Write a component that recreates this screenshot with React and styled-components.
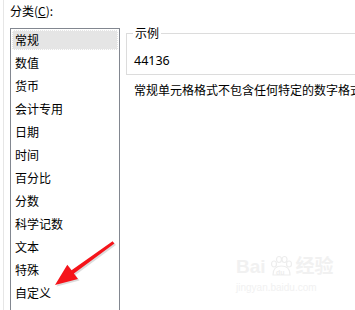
import React from "react";
import styled, { createGlobalStyle } from "styled-components";

const GlobalStyle = createGlobalStyle`
  html, body {
    margin: 0;
    padding: 0;
    background: #fff;
  }
`;

const categories = [
  "常规", "数值", "货币", "会计专用", "日期", "时间",
  "百分比", "分数", "科学记数", "文本", "特殊", "自定义",
];

const App = () => {
  return (
    <>
      <GlobalStyle />
      <Page>
        <Frame>
          <LeftColumn>
            <FieldLabel>
              分类(<u>C</u>):
            </FieldLabel>
            <ListBox>
              {categories.map((name, index) => (
                <ListItem key={name} $selected={index === 0}>
                  {name}
                </ListItem>
              ))}
            </ListBox>
          </LeftColumn>

          <RightColumn>
            <SampleGroup>
              <legend>示例</legend>
              <SampleValue>44136</SampleValue>
            </SampleGroup>
            <Description>常规单元格格式不包含任何特定的数字格式。</Description>
          </RightColumn>
        </Frame>

        <Arrow width="130" height="60" viewBox="0 0 130 60">
          <polygon
            points="5,55 17.3,34.7 21.5,40.3 62.6,11.2 64.4,13.6 23.9,43.5 28,49.1"
            fill="#b9b9b9"
            opacity="0.5"
            transform="translate(1.5,1.5)"
          />
          <polygon
            points="5,55 17.3,34.7 21.5,40.3 62.6,11.2 64.4,13.6 23.9,43.5 28,49.1"
            fill="#f5141a"
          />
        </Arrow>

        <Watermark>
          <WatermarkLogo>
            <span>Bai</span>
            <svg width="26" height="24" viewBox="0 0 26 24">
              <g fill="none" stroke="#ededed" strokeWidth="1.2">
                <ellipse cx="6" cy="9" rx="2.5" ry="3" />
                <ellipse cx="11" cy="4.5" rx="2.5" ry="3" />
                <ellipse cx="16.5" cy="4.5" rx="2.5" ry="3" />
                <ellipse cx="21" cy="9" rx="2.5" ry="3" />
                <path d="M5 20 C5 13 9 11 13.5 11 C18 11 22 13 22 20 Z" />
              </g>
              <text x="8" y="19.5" fontSize="7" fill="#ededed" fontFamily="Liberation Sans, sans-serif">du</text>
            </svg>
            <span>经验</span>
          </WatermarkLogo>
          <WatermarkUrl>jingyan.baidu.com</WatermarkUrl>
        </Watermark>
      </Page>
    </>
  );
};

const Page = styled.div`
  position: relative;
  width: 355px;
  height: 310px;
  overflow: hidden;
  background: #fff;
  font-family: "Microsoft YaHei", "Noto Sans CJK SC", "Noto Sans", sans-serif;
  font-size: 12px;
  color: #000;
`;

const Frame = styled.div`
  display: flex;
  align-items: flex-start;
  height: 100%;
  margin-left: 3px;
  padding-left: 6px;
  border-left: 1px solid #e6e6e6;
`;

const LeftColumn = styled.div`
  display: flex;
  flex-direction: column;
  width: 110px;
  flex-shrink: 0;
`;

const FieldLabel = styled.div`
  height: 28px;
  box-sizing: border-box;
  padding-top: 3px;
  line-height: 16px;

  u {
    text-decoration: underline;
    text-underline-offset: 1px;
  }
`;

const ListBox = styled.ul`
  list-style: none;
  margin: 0;
  padding: 1px;
  height: 320px;
  border: 1px solid #828790;
  box-sizing: border-box;
`;

const ListItem = styled.li`
  height: 20px;
  margin-bottom: 3px;
  padding-left: 2px;
  box-sizing: border-box;
  white-space: nowrap;
  border: 1px dotted ${({ $selected }) => ($selected ? "#ffffff" : "transparent")};
  background: ${({ $selected }) => ($selected ? "#e5e5e5" : "transparent")};
  line-height: 18px;
`;

const RightColumn = styled.div`
  display: flex;
  flex-direction: column;
  width: 300px;
  flex-shrink: 0;
  margin-left: 6px;
  padding-top: 25px;
`;

const SampleGroup = styled.fieldset`
  margin: 0;
  padding: 0 0 5px 7px;
  border: 1px solid #dcdcdc;
  min-width: 0;

  legend {
    padding: 0 2px;
    margin-left: -1px;
    line-height: 16px;
    color: #000;
  }
`;

const SampleValue = styled.div`
  margin-top: 12px;
  line-height: 16px;
  font-family: "Noto Sans", "Liberation Sans", sans-serif;
  font-size: 12.5px;
`;

const Description = styled.div`
  margin-top: 7px;
  padding-left: 8px;
  line-height: 16px;
  white-space: nowrap;
`;

const Arrow = styled.svg`
  position: absolute;
  left: 50px;
  top: 230px;
`;

const Watermark = styled.div`
  position: absolute;
  left: 236px;
  top: 255px;
  display: flex;
  flex-direction: column;
  align-items: flex-start;
  color: #f1f1f1;
  pointer-events: none;
`;

const WatermarkLogo = styled.div`
  display: flex;
  align-items: flex-end;
  gap: 2px;
  font-family: "Liberation Sans", "Noto Sans CJK SC", sans-serif;
  font-size: 19px;
  font-weight: bold;
  line-height: 24px;
`;

const WatermarkUrl = styled.div`
  font-family: "Liberation Sans", sans-serif;
  font-size: 10px;
  line-height: 14px;
  margin-top: 2px;
`;

export default App;
